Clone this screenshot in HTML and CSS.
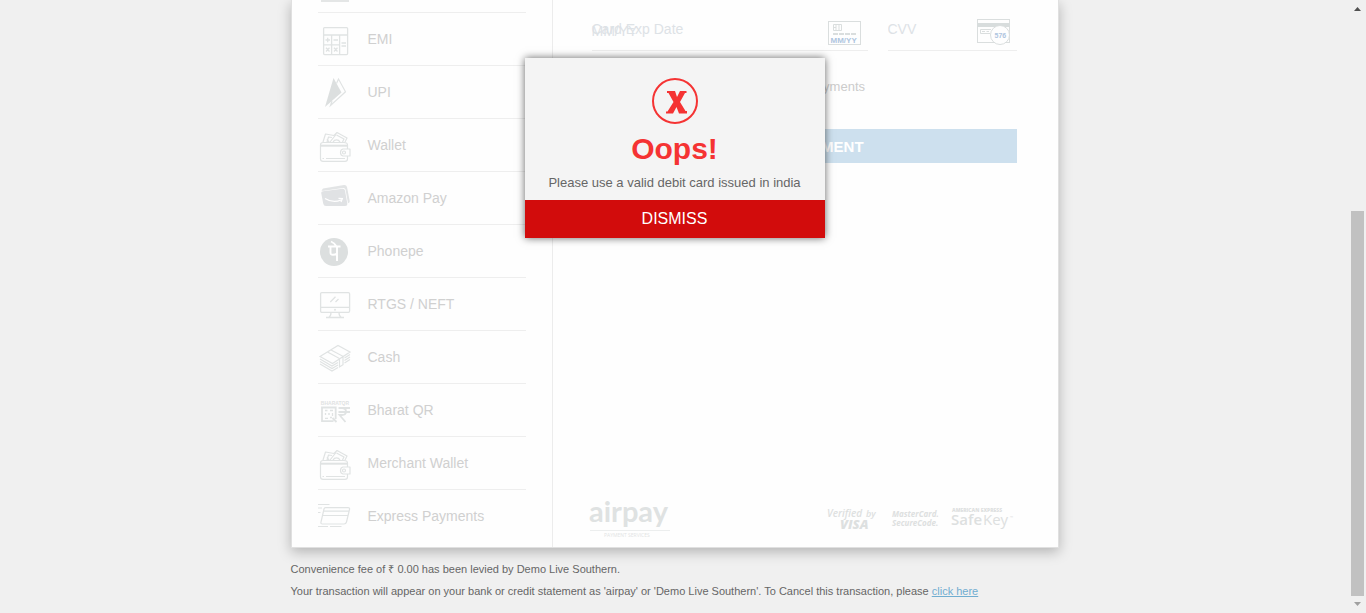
FILE: index.html
```html
<!DOCTYPE html>
<html lang="en">
<head>
<meta charset="utf-8">
<title>airpay payment</title>
<link rel="stylesheet" href="styles.css">
</head>
<body>
<svg class="defs" aria-hidden="true">
  <symbol id="wallet" viewBox="0 0 34 34">
    <g fill="none" stroke="#e0e3e3" stroke-width="1.2" stroke-linejoin="round">
      <path d="M5 14L7.500 6L16 7.500M16 7.500L19 4.500L29 10L27 14M9 14l1.500-5 3.500.5M12 14l6-7.500M18.500 7l7.500 4-1.500 3M15 14a4 4 0 017 0M9 11l2 3"/>
      <path d="M4.500 14.500H26Q29.500 14.500 29.500 17V21M29.500 28V31Q29.500 33.300 27 33.300H5Q2.500 33.300 2.500 31V17Q2.500 14.500 5 14.500M8 30.500H27M4.500 30.500H6"/>
      <path d="M3 17.700H29" stroke-width="2"/>
      <path d="M32 21H25Q22.500 21.500 22.500 24.500T25 28H32Z"/><circle cx="26" cy="24.500" r="1.500"/>
    </g>
  </symbol>
</svg>
<div class="page">
  <main class="content">
    <div class="card">
      <nav class="methods" aria-label="Payment methods">
        <div class="previous"><span class="stub"></span></div>
        <a class="method" href="#emi">
          <svg class="icon" viewBox="0 0 34 34" fill="none" stroke="#e0e3e3" stroke-width="1.300"><rect x="5.600" y="5.600" width="24" height="27" rx="1"/><path d="M5.600 13H29.600M13.600 13V32.600M21.600 13V32.600M5.600 22.800H21.600M7.500 18H12M9.700 15.800V20.200M15.500 18H20M23.500 21H28M23.500 24H28M8 25.700L11.500 29.500M11.500 25.700L8 29.500M16 25.700L19.500 29.500M19.500 25.700L16 29.500"/></svg>
          <span>EMI</span></a>
        <a class="method" href="#upi">
          <svg class="icon" viewBox="0 0 34 34"><path d="M15.500 3L23.500 17.500L7 32Z" fill="#dcdfdf"/><path d="M18.500 8.500L20.500 4L27.500 16.800L12.500 30.500L14 26" fill="none" stroke="#e0e3e3" stroke-width="1.200"/></svg>
          <span>UPI</span></a>
        <a class="method" href="#wallet"><svg class="icon"><use href="#wallet"/></svg><span>Wallet</span></a>
        <a class="method" href="#amazon">
          <svg class="icon" viewBox="0 0 34 34"><path d="M5 7.500L26 4Q28.500 3.800 29 6L31.700 20Q32 21.500 30.500 22L30 22.200L27.500 8.500Q27 6.700 25 7L6 9.800Q4 10 3.500 9.500Z" fill="#e2e4e5"/><path d="M3.200 12Q3 10.500 5 10.300L24.500 7.800Q26.500 7.600 27 9.500L29.300 22.500Q29.500 25 27 25H8Q5.700 25 5.200 22.500Z" fill="#e0e2e4"/><path d="M7 17.500Q15 22.500 23 19M20.500 17.300L24.300 17.500L23 21" fill="none" stroke="#fff" stroke-width="1.300"/></svg>
          <span>Amazon Pay</span></a>
        <a class="method" href="#phonepe">
          <svg class="icon" viewBox="0 0 34 34"><circle cx="16" cy="18" r="14" fill="#dcdfdf"/><path d="M10 12.500H22.500M13 7.500Q16.500 9 18.500 12.500M12.500 12.500V18.500Q12.500 21 15 20.800Q17.500 20.800 19 19.500M19 12.500V27" fill="none" stroke="#fff" stroke-width="1.900"/></svg>
          <span>Phonepe</span></a>
        <a class="method" href="#rtgs">
          <svg class="icon" viewBox="0 0 34 34" fill="none" stroke="#e0e3e3" stroke-width="1.300"><rect x="2.600" y="5.600" width="29" height="19.700" rx="1.200"/><path d="M2.600 20.400H31.600M12.300 15L17.500 9.800M17.500 15L20.500 12M13 25.500Q13 29 11 30M21 25.500Q21 29 23 30M8 30.500H26"/><circle cx="17" cy="22.800" r=".4"/></svg>
          <span>RTGS / NEFT</span></a>
        <a class="method" href="#cash">
          <svg class="icon" viewBox="0 0 34 34" fill="none" stroke="#e0e3e3" stroke-width="1.200"><path d="M2 16.500L20 5.500L32 12L14.500 23.500ZM9.500 12L21.500 18.500V27L25 24.700V16.300L13 10M2 19L14 26L20 22.500M2 21.500L14 28.500L20 25M2 24L14 31L20 27.500M32 14.500L26.500 18M32 17L26.500 20.500M32 19.500L26.500 23"/></svg>
          <span>Cash</span></a>
        <a class="method" href="#bharatqr">
          <svg class="icon" viewBox="0 0 34 34" fill="none" stroke="#e0e3e3" stroke-width="1.800"><text x="2.800" y="12" class="tiny-logo">BHARATQR</text><path d="M17.700 26V14.500H4V28.200H15.500M14.500 25L18.500 29M20.500 15H32M20.500 19H32M21 15H24Q28 15 28 18.500T24 22H21.500L27.500 29"/><path d="M7 17.500H9.500M12 17.500H15M7.500 20V22M10 21H12M14.500 20V23M7 25.300H10M12 24.500H14" stroke-width="1.300"/></svg>
          <span>Bharat QR</span></a>
        <a class="method" href="#merchant"><svg class="icon"><use href="#wallet"/></svg><span>Merchant Wallet</span></a>
        <a class="method" href="#express">
          <svg class="icon" viewBox="0 0 34 34" fill="none" stroke="#e0e3e3" stroke-width="1.200"><path d="M7.500 8.600H30Q32 8.600 31.500 10.500L28.500 23Q28 25 26 25H4.500Q2.500 25 3 23L6 10Q6.300 8.600 7.500 8.600ZM6 12.200H31M5 16.500H30M0 5.500H11.500M0 9H4M0 13.500H2.500M0 27.500H10M12 27.500H23.500"/></svg>
          <span>Express Payments</span></a>
      </nav>
      <form class="panel">
        <div class="fields">
          <div class="field expiry">
            <label for="exp">Card Exp Date</label>
            <input id="exp" type="text" placeholder="MM/YY">
            <svg class="field-icon low" viewBox="0 0 34 26"><rect x=".5" y=".5" width="32" height="23" fill="none" stroke="#dadede"/><path d="M5.500 3.500H13.500V9.500H5.500ZM8 3.500V9.500M11 3.500V9.500M5.500 6.500H8" fill="none" stroke="#dadede"/><path d="M5 13H28.500" stroke="#dadede" stroke-width="2" stroke-dasharray="5 1"/><text x="2.500" y="22" class="date-mark">MM/YY</text></svg>
          </div>
          <div class="field cvv">
            <input id="cvv" type="text" placeholder="CVV" aria-label="CVV">
            <svg class="field-icon" viewBox="0 0 34 26"><rect x=".5" y=".5" width="32" height="23" fill="none" stroke="#dadede"/><path d="M0 6H33" stroke="#d8dddd" stroke-width="4"/><path d="M14 10.500H3.500V14.500H13M5 12.500H8M9.500 12.500H12" fill="none" stroke="#dadede"/><circle cx="23" cy="16" r="9.500" fill="#fefefe" stroke="#dadede"/><text x="17.500" y="18.500" class="code-mark">576</text></svg>
          </div>
        </div>
        <label class="save"><input type="checkbox"> Save your card details for faster payments</label>
        <button class="pay" type="submit">MAKE PAYMENT</button>
        <footer class="logos">
          <svg class="airpay" viewBox="0 0 82 38" role="img" aria-label="airpay payment services"><text x="1" y="20" class="airpay-name">airpay</text><path d="M2 28.500H82" stroke="#eceeee"/><text x="16" y="35" class="airpay-sub">PAYMENT SERVICES</text></svg>
          <svg class="badges" viewBox="0 0 190 30" role="img" aria-label="Verified by Visa, MasterCard SecureCode, American Express SafeKey"><g class="badge-text"><text x="0" y="11" class="verified">Verified</text><text x="39" y="11" class="by">by</text><text x="13" y="23" class="visa">VISA</text><text x="65" y="11" class="secure">MasterCard.</text><text x="65" y="20" class="secure">SecureCode.</text><text x="125" y="6" class="amex">AMERICAN EXPRESS</text><text x="124" y="19" class="safe">Safe</text><text x="156" y="19" class="key">Key</text><text x="183" y="13" class="tm">™</text></g></svg>
        </footer>
      </form>
    </div>
    <div class="notes">
      <p>Convenience fee of ₹ 0.00 has been levied by Demo Live Southern.</p>
      <p>Your transaction will appear on your bank or credit statement as 'airpay' or 'Demo Live Southern'. To Cancel this transaction, please <a href="#cancel">click here</a></p>
    </div>
    <div class="dialog" role="alertdialog" aria-labelledby="oops" aria-describedby="message">
      <div class="dialog-body">
        <svg class="error-icon" viewBox="0 0 46 46"><circle cx="23" cy="23" r="22" fill="none" stroke="#f53333" stroke-width="2"/><path d="M15 13H23L25 19L28 13H34.500V15H33L28 24L33.500 33H35V35.500H27L24.500 29L21 35.500H14V33.500H15.500L21.500 24L16.500 15H15Z" fill="#f53333"/></svg>
        <h1 id="oops">Oops!</h1>
        <p id="message">Please use a valid debit card issued in india</p>
      </div>
      <button class="dismiss" type="button">DISMISS</button>
    </div>
  </main>
  <div class="scrollbar" aria-hidden="true">
    <svg class="arrow" viewBox="0 0 17 17"><path d="M5 11L8.500 7L12 11Z" fill="#505050"/></svg>
    <div class="track"><div class="thumb"></div></div>
    <svg class="arrow" viewBox="0 0 17 17"><path d="M5 6L8.500 10L12 6Z" fill="#a0a0a0"/></svg>
  </div>
</div>
</body>
</html>
```
FILE: styles.css
```css
* { box-sizing: border-box; }
body { margin: 0; background: #f0f0f0; font-family: "Liberation Sans", Arial, sans-serif; font-size: 14px; color: #666; }
.defs { position: absolute; width: 0; height: 0; }
.page { display: flex; min-height: 100vh; }
.content { position: relative; flex: 1; min-width: 0; }
.card { display: flex; width: 100%; max-width: 768px; margin: 0 auto; background: #fefefe; border: 1px solid #e0e0e0; border-top: 0; box-shadow: 0 4px 12px rgba(0, 0, 0, .25); }

.methods { flex: 0 0 261px; padding: 0 26px 4px; border-right: 1px solid #ececec; }
.previous { height: 13px; border-bottom: 1px solid #eee; }
.stub { display: block; width: 28px; height: 2px; margin-left: 3px; background: #e4e6e6; }
.method { display: flex; align-items: center; gap: 16px; height: 53px; border-bottom: 1px solid #eee; color: #d0d0d0; text-decoration: none; }
.method:last-child { border-bottom-color: transparent; }
.icon { width: 34px; height: 34px; overflow: visible; }
.tiny-logo { font: 700 5px "Liberation Sans", sans-serif; fill: #dfe2e2; stroke: none; }

.panel { flex: 1; min-width: 0; display: flex; flex-direction: column; padding: 0 41px 7px 39px; }
.fields { display: flex; gap: 20px; height: 51px; }
.field { position: relative; display: flex; align-items: flex-start; min-width: 0; padding-top: 19px; border-bottom: 1px solid #eee; }
.expiry { flex: 1; }
.cvv { flex: 0 0 129px; }
.field input { flex: 1; min-width: 0; height: 20px; padding: 0; border: 0; background: transparent; font: inherit; }
.expiry input { height: 24px; }
.field input::placeholder { color: #dde2e6; opacity: 1; }
.field label { position: absolute; left: 0; top: 20px; line-height: 18px; color: #dde2e6; }
.field-icon { flex: none; width: 34px; height: 26px; margin-right: 6px; }
.low { margin-top: 2px; }
.date-mark { font: 700 8px "Liberation Sans", sans-serif; fill: #aec5df; }
.code-mark { font: 700 7px "Liberation Sans", sans-serif; fill: #aec5df; }
.save { display: flex; align-items: center; gap: 12px; height: 20px; margin-top: 25px; font-size: 13px; color: #ccc; white-space: nowrap; }
.save input { width: 18px; height: 18px; margin: 0; }
.pay { height: 34px; margin-top: 33px; padding: 0; border: 0; background: #cde0ee; color: #fff; font: 700 15px "Liberation Sans", Arial, sans-serif; }
.logos { display: flex; justify-content: space-between; align-items: center; margin: auto 0 0; }
.airpay { width: 82px; height: 38px; margin-left: -4px; overflow: visible; }
.badges { width: 190px; height: 30px; overflow: visible; }
.airpay-name { font: 700 29px Lato, sans-serif; fill: #dfe2e2; }
.airpay-sub { font: 5px "Open Sans", sans-serif; fill: #e2e4e4; }
.badge-text { fill: #dde0e0; font-family: "Open Sans", sans-serif; }
.verified { font-size: 10px; font-style: italic; font-weight: 600; }
.by { font-size: 9px; font-style: italic; font-weight: 600; }
.visa { font-size: 13px; font-style: italic; font-weight: 800; }
.secure { font-size: 8px; font-style: italic; font-weight: 700; }
.amex { font-size: 5px; font-weight: 800; }
.safe { font-size: 15px; font-weight: 600; }
.key { font-size: 15px; }
.tm { font-size: 4px; }

.notes { width: 100%; max-width: 768px; margin: 0 auto; padding-top: 10px; font-size: 11px; line-height: 22px; }
.notes p { margin: 0; }
.notes a { color: #70add0; }

.dialog { position: absolute; top: 58px; left: 50%; width: 300px; transform: translateX(-50%); background: #f4f4f4; box-shadow: 0 0 8px rgba(0, 0, 0, .6); text-align: center; }
.dialog-body { display: flex; flex-direction: column; align-items: center; padding: 20px 10px 8px; }
.error-icon { width: 46px; height: 46px; }
.dialog h1 { margin: 8px 0; font-size: 30px; line-height: 34px; color: #f53333; }
.dialog p { margin: 0; font-size: 13px; line-height: 18px; }
.dismiss { display: block; width: 100%; height: 38px; padding: 0; border: 0; background: #d20c0c; color: #fff; font: 16px "Liberation Sans", Arial, sans-serif; }

.scrollbar { display: flex; flex-direction: column; flex: 0 0 17px; height: 100vh; }
.arrow { width: 17px; height: 17px; }
.track { flex: 1; display: flex; flex-direction: column; justify-content: flex-end; padding: 0 2px; }
.thumb { height: 66.5%; background: #c1c1c1; }
```
